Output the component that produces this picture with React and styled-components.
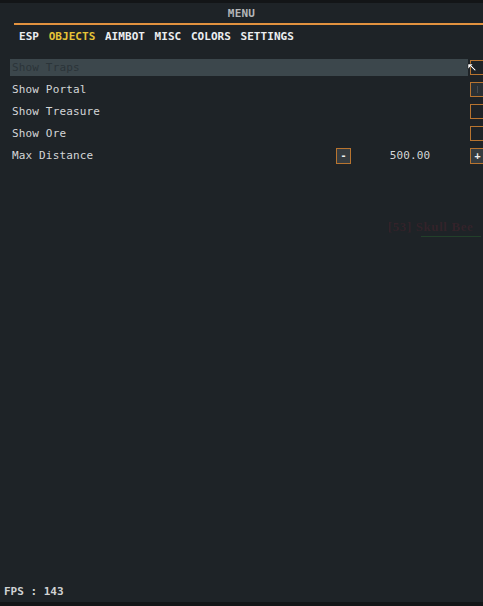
import React from "react";
import styled, { createGlobalStyle } from "styled-components";

const Global = createGlobalStyle`
  html, body { margin: 0; padding: 0; background: #131517; }
  body { font-family: "DejaVu Sans Mono", "Liberation Mono", monospace; }
  #root { width: 483px; height: 606px; overflow: hidden; }
`;

const Screen = styled.div`
  width: 483px;
  height: 606px;
  padding: 3px 0 4px;
  box-sizing: border-box;
  background: #131517;
  overflow: hidden;
`;

const Panel = styled.div`
  position: relative;
  height: 100%;
  background: #1e2327;
  display: flex;
  flex-direction: column;
  overflow: hidden;
`;

const Header = styled.div`
  height: 20px;
  display: flex;
  align-items: center;
  justify-content: center;
  color: #b4b6b8;
  font-weight: bold;
  font-size: 11px;
  letter-spacing: 0.2px;
`;

const Rule = styled.div`
  margin-left: 14px;
  height: 2px;
  background: #e2923f;
`;

const Tabs = styled.div`
  display: flex;
  gap: 9.6px;
  padding-left: 19px;
  height: 22px;
  align-items: center;
`;

const Tab = styled.span`
  font-size: 11px;
  font-weight: bold;
  letter-spacing: 0.05px;
  color: ${(p) => (p.$active ? "#e6c437" : "#eceef0")};
`;

const List = styled.div`
  margin-top: 12px;
  padding-left: 10px;
  display: flex;
  flex-direction: column;
  gap: 5px;
`;

const Row = styled.div`
  display: grid;
  grid-template-columns: ${(p) => (p.$slider ? "1fr 15px 118px 15px" : "1fr 15px")};
  height: 17px;
  align-items: center;
  margin-right: -1px;
`;

const Label = styled.div`
  height: 17px;
  margin-right: 1px;
  display: flex;
  align-items: center;
  padding-left: 2px;
  font-size: 11px;
  letter-spacing: 0.15px;
  color: ${(p) => (p.$selected ? "#2b3439" : "#d4d6d8")};
  background: ${(p) => (p.$selected ? "#3c474c" : "transparent")};
`;

const Box = styled.div`
  width: 15px;
  height: 15px;
  box-sizing: border-box;
  border: 1.5px solid #b8742f;
  background: ${(p) => (p.$hover ? "#2a3034" : "#1e2327")};
  margin-left: 1px;
  display: flex;
  align-items: center;
  justify-content: center;
`;

const StepButton = styled.div`
  width: 15px;
  height: 16px;
  box-sizing: border-box;
  border: 1.5px solid #b8742f;
  background: #363c40;
  color: #f0f0f0;
  font-size: 10px;
  font-weight: bold;
  display: flex;
  align-items: center;
  justify-content: center;
  line-height: 1;
  margin-left: ${(p) => (p.$right ? "1px" : "0")};
`;

const Value = styled.div`
  text-align: center;
  font-size: 11px;
  letter-spacing: 0.15px;
  color: #d4d6d8;
`;

const Spacer = styled.div`
  flex: 1;
`;

const Fps = styled.div`
  padding-left: 4px;
  height: 22px;
  display: flex;
  align-items: center;
  font-size: 11px;
  font-weight: bold;
  color: #d0d2d4;
`;

const EspLabel = styled.div`
  position: absolute;
  left: 388px;
  top: 216px;
  font-family: "Liberation Serif", serif;
  font-weight: bold;
  font-size: 13px;
  letter-spacing: 0.6px;
  color: #33232a;
  white-space: nowrap;
  filter: blur(0.4px);
`;

const EspBar = styled.div`
  position: absolute;
  left: 421px;
  top: 233px;
  width: 60px;
  height: 1px;
  background: #22402a;
`;

const Cursor = styled.svg`
  position: absolute;
  left: 467px;
  top: 60px;
`;

const Mark = styled.div`
  width: 1px;
  height: 7px;
  background: #454b50;
`;

const rows = [
  { label: "Show Traps", selected: true },
  { label: "Show Portal", hover: true },
  { label: "Show Treasure" },
  { label: "Show Ore" },
];

const tabs = ["ESP", "OBJECTS", "AIMBOT", "MISC", "COLORS", "SETTINGS"];

export default function App() {
  return (
    <>
      <Global />
      <Screen>
        <Panel>
          <Header>MENU</Header>
          <Rule />
          <Tabs>
            {tabs.map((t) => (
              <Tab key={t} $active={t === "OBJECTS"}>
                {t}
              </Tab>
            ))}
          </Tabs>
          <List>
            {rows.map((r) => (
              <Row key={r.label}>
                <Label $selected={r.selected}>{r.label}</Label>
                <Box $hover={r.hover}>{r.hover && <Mark />}</Box>
              </Row>
            ))}
            <Row $slider>
              <Label>Max Distance</Label>
              <StepButton>-</StepButton>
              <Value>500.00</Value>
              <StepButton $right>+</StepButton>
            </Row>
          </List>
          <Spacer />
          <Fps>FPS : 143</Fps>
          <EspLabel>[53] Skull Bee</EspLabel>
          <EspBar />
          <Cursor width="10" height="12" viewBox="0 0 10 12">
            <path d="M1 1 L6 1 L4.5 2.5 L9 7 L8 8 L3.5 3.5 L1 6 Z" fill="#ffffff" stroke="#111" strokeWidth="0.5" />
          </Cursor>
        </Panel>
      </Screen>
    </>
  );
}
